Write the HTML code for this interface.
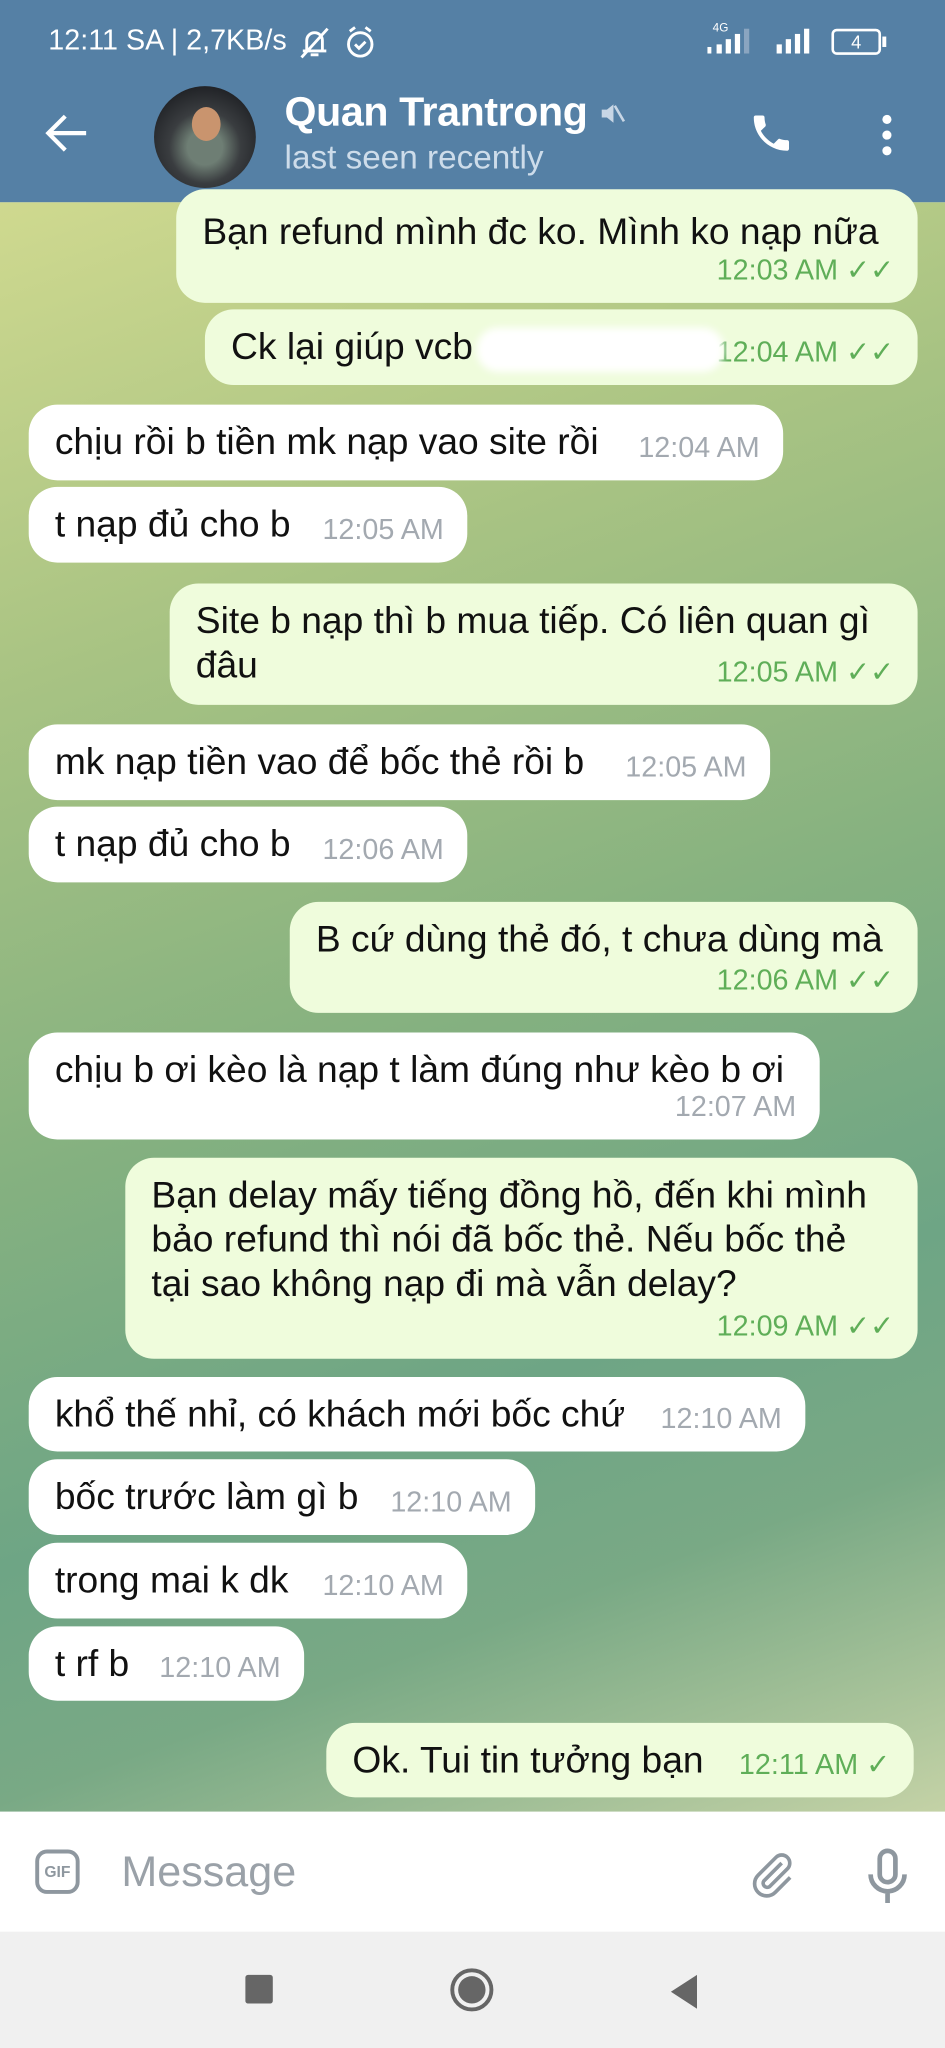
<!DOCTYPE html>
<html><head><meta charset="utf-8"><style>
*{margin:0;padding:0;box-sizing:border-box}
html,body{width:945px;height:2048px;overflow:hidden;background:#f0f0f0}
#w{position:absolute;left:0;top:0;width:724px;height:1569px;transform:scale(1.30525);transform-origin:0 0;font-family:"Liberation Sans","DejaVu Sans",sans-serif;overflow:hidden}
#top{position:absolute;left:0;top:0;width:724px;height:155px;background:#5580a5}
.st{position:absolute;color:#fff;font-size:22px;top:18px}
#chat{position:absolute;left:0;top:155px;width:724px;height:1233px;background:linear-gradient(160deg,#cfd98f 0%,#a8c383 25%,#85b180 50%,#6ea585 70%,#79a985 82%,#c4d2a6 100%)}
.b{position:absolute;border-radius:22px;font-size:28.5px;line-height:34px;color:#111;padding:12px 20px;white-space:nowrap}
.o{background:#effcdc;right:21px}
.i{background:#fff;left:22px}
.t{position:absolute;right:18px;bottom:8px;font-size:22px}
.o .t{color:#5fae58}
.i .t{color:#a3a9b0}
#inp{position:absolute;left:0;top:1388px;width:724px;height:92px;background:#fff}
#nav{position:absolute;left:0;top:1480px;width:724px;height:89px;background:#f0f0f0}
</style></head><body><div id="w">
<div id="top">
<div class="st" style="left:37px">12:11 SA | 2,7KB/s</div>
<svg style="position:absolute;left:228px;top:19px" width="60" height="28" viewBox="0 0 60 28" fill="none" stroke="#fff" stroke-width="2.2"><path d="M4 20h18M7 20v-8a6 6 0 0112 0v8M10 23h6M3 25L23 3"/><circle cx="48" cy="15" r="9"/><path d="M44 15l3 3 5-5M40 5l4-3M56 5l-4-3"/></svg>
<div style="position:absolute;left:546px;top:16px;color:#fff;font-size:9px">4G</div>
<svg style="position:absolute;left:540px;top:20px" width="94" height="22" viewBox="0 0 94 22" fill="#fff"><rect x="2" y="16" width="3" height="5"/><rect x="9" y="14" width="4" height="7"/><rect x="16" y="10" width="4" height="11"/><rect x="23" y="6" width="4" height="15"/><rect x="30" y="2" width="4" height="19" fill="#8aa5c0"/><rect x="55" y="14" width="4" height="7"/><rect x="62" y="10" width="4" height="11"/><rect x="69" y="6" width="4" height="15"/><rect x="76" y="2" width="4" height="19"/></svg>
<div style="position:absolute;left:637px;top:22px;width:38px;height:20px;border:2px solid #fff;border-radius:4px;color:#fff;font-size:14px;text-align:center;line-height:16px">4</div>
<div style="position:absolute;left:676px;top:28px;width:3px;height:8px;background:#fff"></div>
<svg style="position:absolute;left:34px;top:86px" width="34" height="32" viewBox="0 0 34 32" fill="none" stroke="#fff" stroke-width="3.2"><path d="M32 16H4M16 3L3 16l13 13"/></svg>
<div style="position:absolute;left:118px;top:66px;width:78px;height:78px;border-radius:50%;background:radial-gradient(circle at 50% 60%,#6e7e74 0 22%,#3a3d40 45%,#1e2024 80%)"></div>
<div style="position:absolute;left:147px;top:82px;width:22px;height:26px;border-radius:50%;background:#c9946e"></div>
<div style="position:absolute;left:218px;top:67px;color:#fff;font-size:31.5px;font-weight:bold;letter-spacing:-.3px">Quan Trantrong</div>
<svg style="position:absolute;left:459px;top:77px" width="20" height="20" viewBox="0 0 20 20" fill="#c8d6e5"><path d="M2 7h4l5-4v14l-5-4H2z"/><path d="M12 4l7 12" stroke="#c8d6e5" stroke-width="2"/></svg>
<div style="position:absolute;left:218px;top:107px;color:#cddcea;font-size:25.5px">last seen recently</div>
<svg style="position:absolute;left:573px;top:84px" width="36" height="36" viewBox="0 0 24 24" fill="#fff"><path d="M6.6 10.8c1.4 2.8 3.8 5.1 6.6 6.6l2.2-2.2c.3-.3.7-.4 1-.2 1.1.4 2.3.6 3.6.6.6 0 1 .4 1 1V20c0 .6-.4 1-1 1C10.6 21 3 13.4 3 4c0-.6.4-1 1-1h3.5c.6 0 1 .4 1 1 0 1.3.2 2.5.6 3.6.1.3 0 .7-.2 1z"/></svg>
<div style="position:absolute;left:676px;top:88px;width:7px;height:7px;border-radius:50%;background:#fff;box-shadow:0 12px 0 #fff,0 24px 0 #fff"></div>
</div>
<div id="chat">
<div class="b o" style="left:135px;top:-10px;height:87px;padding-top:16px">Bạn refund mình đc ko. Mình ko nạp nữa<span class="t">12:03 AM ✓✓</span></div>
<div class="b o" style="left:157px;top:82px;height:58px">Ck lại giúp vcb<span class="t">12:04 AM ✓✓</span><div style="position:absolute;left:208px;top:14px;width:190px;height:34px;background:#fff;border-radius:17px;filter:blur(3px)"></div></div>
<div class="b i" style="top:155px;width:578px;height:58px">chịu rồi b tiền mk nạp vao site rồi<span class="t">12:04 AM</span></div>
<div class="b i" style="top:218px;width:336px;height:58px">t nạp đủ cho b<span class="t">12:05 AM</span></div>
<div class="b o" style="left:130px;top:292px;height:93px">Site b nạp thì b mua tiếp. Có liên quan gì<br>đâu<span class="t">12:05 AM ✓✓</span></div>
<div class="b i" style="top:400px;width:568px;height:58px">mk nạp tiền vao để bốc thẻ rồi b<span class="t">12:05 AM</span></div>
<div class="b i" style="top:463px;width:336px;height:58px">t nạp đủ cho b<span class="t">12:06 AM</span></div>
<div class="b o" style="left:222px;top:536px;height:85px">B cứ dùng thẻ đó, t chưa dùng mà<span class="t">12:06 AM ✓✓</span></div>
<div class="b i" style="top:636px;width:606px;height:82px">chịu b ơi kèo là nạp t làm đúng như kèo b ơi<span class="t">12:07 AM</span></div>
<div class="b o" style="left:96px;top:732px;height:154px">Bạn delay mấy tiếng đồng hồ, đến khi mình<br>bảo refund thì nói đã bốc thẻ. Nếu bốc thẻ<br>tại sao không nạp đi mà vẫn delay?<span class="t">12:09 AM ✓✓</span></div>
<div class="b i" style="top:900px;width:595px;height:57px">khổ thế nhỉ, có khách mới bốc chứ<span class="t">12:10 AM</span></div>
<div class="b i" style="top:963px;width:388px;height:58px">bốc trước làm gì b<span class="t">12:10 AM</span></div>
<div class="b i" style="top:1027px;width:336px;height:58px">trong mai k dk<span class="t">12:10 AM</span></div>
<div class="b i" style="top:1091px;width:211px;height:57px">t rf b<span class="t">12:10 AM</span></div>
<div class="b o" style="left:250px;right:24px;top:1165px;height:57px">Ok. Tui tin tưởng bạn<span class="t">12:11 AM ✓</span></div>
</div>
<div id="inp">
<div style="position:absolute;left:27px;top:29px;width:34px;height:34px;border:3px solid #8e979f;border-radius:9px;color:#8e979f;font-size:12px;font-weight:bold;text-align:center;line-height:28px">GIF</div>
<div style="position:absolute;left:93px;top:27px;color:#9aa1a8;font-size:33px">Message</div>
<svg style="position:absolute;left:570px;top:28px" width="42" height="42" viewBox="0 0 24 24" fill="none" stroke="#8e979f" stroke-width="1.6"><path d="M16.5 6.5l-7.8 7.8a1.8 1.8 0 002.5 2.5l7.8-7.8a3.5 3.5 0 00-5-5L6.2 11.8a5.3 5.3 0 007.5 7.5l6.5-6.5"/></svg>
<svg style="position:absolute;left:660px;top:26px" width="40" height="48" viewBox="0 0 20 24" fill="none" stroke="#8e979f" stroke-width="1.8"><rect x="7" y="2" width="6" height="12" rx="3"/><path d="M3.5 11a6.5 6.5 0 0013 0M10 17.5V22"/></svg>
</div>
<div id="nav">
<div style="position:absolute;left:188px;top:33px;width:21px;height:22px;background:#666;border-radius:2px"></div>
<div style="position:absolute;left:345px;top:28px;width:33px;height:33px;border:3px solid #666;border-radius:50%"><div style="margin:3px;width:21px;height:21px;border-radius:50%;background:#666"></div></div>
<svg style="position:absolute;left:512px;top:31px" width="24" height="30" viewBox="0 0 24 30"><path d="M22 2L2 15l20 13z" fill="#666"/></svg>
</div>
</div></body></html>
